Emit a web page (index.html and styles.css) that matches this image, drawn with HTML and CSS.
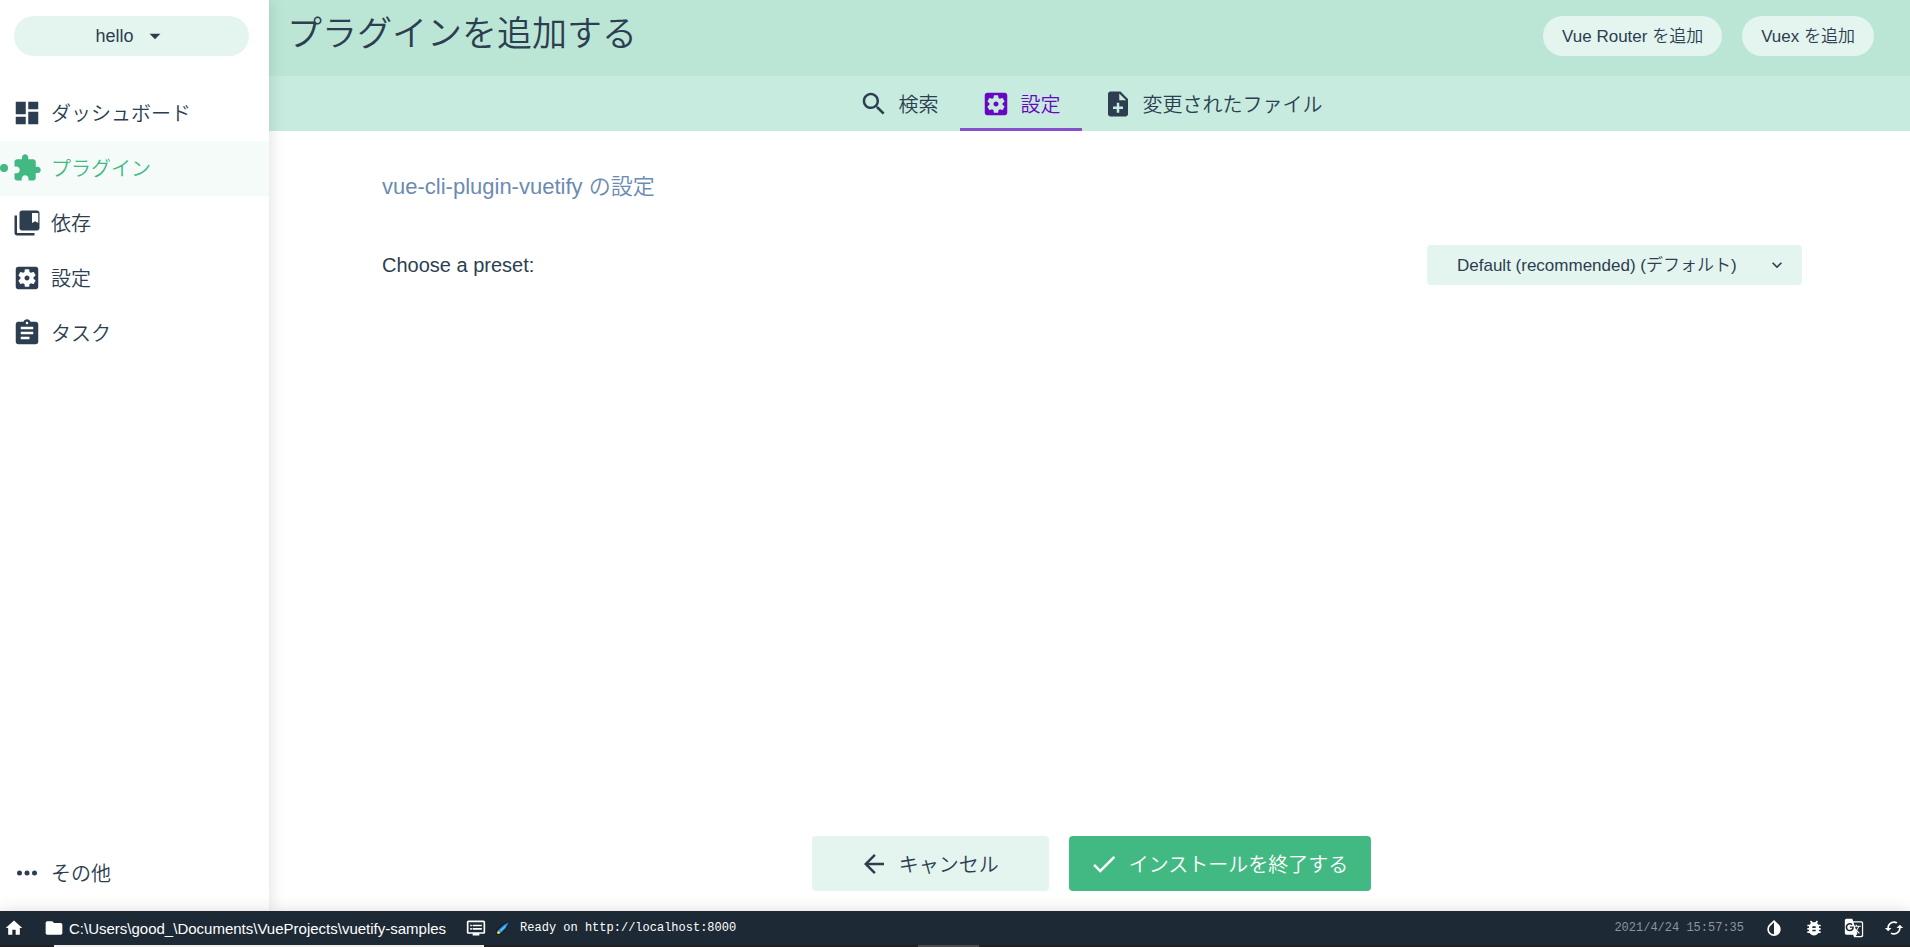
FILE: index.html
```html
<!DOCTYPE html>
<html lang="ja">
  <head>
    <meta charset="UTF-8" />
    <meta name="viewport" content="width=device-width, initial-scale=1.0" />
    <title>プラグインを追加する</title>
    <link rel="stylesheet" href="styles.css">
  </head>
  <body>
    <div class="app">
      <!-- サイドバー -->
      <aside class="sidebar">
        <button class="project-button">
          hello
          <svg class="arrow-down" viewBox="0 0 24 24"><path d="M7 10l5 5 5-5z" /></svg>
        </button>
        <nav class="nav">
          <a href="#" class="nav-item">
            <svg class="icon" viewBox="0 0 24 24"><path d="M3 13h8V3H3v10zm0 8h8v-6H3v6zm10 0h8V11h-8v10zm0-18v6h8V3h-8z" /></svg>
            ダッシュボード
          </a>
          <a href="#" class="nav-item active">
            <svg class="icon" viewBox="0 0 24 24"><path d="M20.5 11H19V7c0-1.1-.9-2-2-2h-4V3.5C13 2.12 11.88 1 10.5 1S8 2.12 8 3.5V5H4c-1.1 0-1.99.9-1.99 2v3.8H3.5c1.49 0 2.7 1.21 2.7 2.7s-1.21 2.7-2.7 2.7H2V20c0 1.1.9 2 2 2h3.8v-1.5c0-1.49 1.21-2.7 2.7-2.7 1.49 0 2.7 1.21 2.7 2.7V22H17c1.1 0 2-.9 2-2v-4h1.5c1.38 0 2.5-1.12 2.5-2.5S21.88 11 20.5 11z" /></svg>
            プラグイン
          </a>
          <a href="#" class="nav-item">
            <svg class="icon" viewBox="0 0 24 24"><path d="M4 6H2v14c0 1.1.9 2 2 2h14v-2H4V6z" /><path d="M20 2H8c-1.1 0-2 .9-2 2v12c0 1.1.9 2 2 2h12c1.1 0 2-.9 2-2V4c0-1.1-.9-2-2-2zm1 10l-2.5-1.5L16 12V4h5v8z" /></svg>
            依存
          </a>
          <a href="#" class="nav-item">
            <svg class="icon" viewBox="0 0 24 24"><path id="settings-path" d="M12 10c-1.1 0-2 .9-2 2s.9 2 2 2 2-.9 2-2-.9-2-2-2zm7-7H5c-1.11 0-2 .9-2 2v14c0 1.1.89 2 2 2h14c1.11 0 2-.9 2-2V5c0-1.1-.89-2-2-2zm-1.75 9c0 .23-.02.46-.05.68l1.48 1.16c.13.11.17.3.08.45l-1.4 2.42c-.09.15-.27.21-.43.15l-1.74-.7c-.36.28-.76.51-1.18.69l-.26 1.85c-.03.17-.18.3-.35.3h-2.8c-.17 0-.32-.13-.35-.29l-.26-1.85c-.43-.18-.82-.41-1.18-.69l-1.74.7c-.16.06-.34 0-.43-.15l-1.4-2.42c-.09-.15-.05-.34.08-.45l1.48-1.16c-.03-.23-.05-.46-.05-.69 0-.23.02-.46.05-.68l-1.48-1.16c-.13-.11-.17-.3-.08-.45l1.4-2.42c.09-.15.27-.21.43-.15l1.74.7c.36-.28.76-.51 1.18-.69l.26-1.85c.03-.17.18-.3.35-.3h2.8c.17 0 .32.13.35.29l.26 1.85c.43.18.82.41 1.18.69l1.74-.7c.16-.06.34 0 .43.15l1.4 2.42c.09.15.05.34-.08.45l-1.48 1.16c.03.23.05.46.05.69z" /></svg>
            設定
          </a>
          <a href="#" class="nav-item">
            <svg class="icon" viewBox="0 0 24 24"><path d="M19 3h-4.18C14.4 1.84 13.3 1 12 1c-1.3 0-2.4.84-2.82 2H5c-1.1 0-2 .9-2 2v14c0 1.1.9 2 2 2h14c1.1 0 2-.9 2-2V5c0-1.1-.9-2-2-2zm-7 0c.55 0 1 .45 1 1s-.45 1-1 1-1-.45-1-1 .45-1 1-1zm2 14H7v-2h7v2zm3-4H7v-2h10v2zm0-4H7V7h10v2z" /></svg>
            タスク
          </a>
        </nav>
        <a href="#" class="nav-item more">
          <svg class="icon" viewBox="0 0 24 24"><circle cx="6" cy="12" r="2" /><circle cx="12" cy="12" r="2" /><circle cx="18" cy="12" r="2" /></svg>
          その他
        </a>
      </aside>

      <!-- メイン -->
      <main class="main">
        <header class="header">
          <h1>プラグインを追加する</h1>
          <button class="round-button">Vue Router を追加</button>
          <button class="round-button">Vuex を追加</button>
        </header>
        <div class="tabs">
          <button class="tab">
            <svg class="icon" viewBox="0 0 24 24"><path d="M15.5 14h-.79l-.28-.27C15.41 12.59 16 11.11 16 9.5 16 5.91 13.09 3 9.5 3S3 5.91 3 9.5 5.91 16 9.5 16c1.61 0 3.09-.59 4.23-1.57l.27.28v.79l5 4.99L20.49 19l-4.99-5zm-6 0C7.01 14 5 11.99 5 9.5S7.01 5 9.5 5 14 7.01 14 9.5 11.99 14 9.5 14z" /></svg>
            検索
          </button>
          <button class="tab active">
            <svg class="icon" viewBox="0 0 24 24"><use href="#settings-path" /></svg>
            設定
          </button>
          <button class="tab">
            <svg class="icon" viewBox="0 0 24 24"><path d="M14 2H6c-1.1 0-1.99.9-1.99 2L4 20c0 1.1.89 2 1.99 2H18c1.1 0 2-.9 2-2V8l-6-6zm2 14h-3v3h-2v-3H8v-2h3v-3h2v3h3v2zm-3-7V3.5L18.5 9H13z" /></svg>
            変更されたファイル
          </button>
        </div>

        <section class="content">
          <h2>vue-cli-plugin-vuetify の設定</h2>
          <div class="prompt">
            <label for="preset">Choose a preset:</label>
            <div class="select-box">
              <select id="preset">
                <option>Default (recommended) (デフォルト)</option>
              </select>
              <svg class="select-arrow" viewBox="0 0 24 24"><path d="M7.41 8.59L12 13.17l4.59-4.58L18 10l-6 6-6-6z" /></svg>
            </div>
          </div>
        </section>

        <div class="actions">
          <button class="big-button cancel">
            <svg class="icon" viewBox="0 0 24 24"><path d="M20 11H7.83l5.59-5.59L12 4l-8 8 8 8 1.41-1.41L7.83 13H20v-2z" /></svg>
            キャンセル
          </button>
          <button class="big-button primary">
            <svg class="icon" viewBox="0 0 24 24"><path d="M9 16.2L4.8 12l-1.4 1.4L9 19 21 7l-1.4-1.4L9 16.2z" /></svg>
            インストールを終了する
          </button>
        </div>
      </main>
    </div>

    <!-- ステータスバー -->
    <footer class="status-bar">
      <a href="#" class="status-item" aria-label="ホーム">
        <svg class="icon-small" viewBox="0 0 24 24"><path d="M10 20v-6h4v6h5v-8h3L12 3 2 12h3v8z" /></svg>
      </a>
      <div class="status-item">
        <svg class="icon-small" viewBox="0 0 24 24"><path d="M10 4H4c-1.1 0-1.99.9-1.99 2L2 18c0 1.1.9 2 2 2h16c1.1 0 2-.9 2-2V8c0-1.1-.9-2-2-2h-8l-2-2z" /></svg>
        C:\Users\good_\Documents\VueProjects\vuetify-samples
      </div>
      <div class="status-item log">
        <svg class="icon-small" viewBox="0 0 24 24"><path d="M21 3H3c-1.1 0-2 .9-2 2v12c0 1.1.9 2 2 2h5v2h8v-2h5c1.1 0 1.99-.9 1.99-2L23 5c0-1.1-.9-2-2-2zm0 14H3V5h18v12zm-2-9H8v2h11V8zm0 4H8v2h11v-2zM7 8H5v2h2V8zm0 4H5v2h2v-2z" /></svg>
        <svg class="comet" viewBox="0 0 14 14">
          <path d="M13.5 0L7 3 .5 9v4.500H5L10.500 8 12 4z" fill="#10151c" />
          <path d="M13 1L7.500 4 1.500 9.500 4.500 12.500 9.500 7.500z" fill="#1c86d8" />
          <path d="M11 3L4 9l1 1.500 4-4z" fill="#6cbcf2" />
          <circle cx="2.500" cy="11.500" r="1.500" fill="#f7dc3b" />
        </svg>
        <span>Ready on http://localhost:8000</span>
      </div>
      <time class="date">2021/4/24 15:57:35</time>
      <button class="status-item" aria-label="テーマ切り替え">
        <svg class="icon-small" viewBox="0 0 24 24"><path d="M17.66 7.93L12 2.27 6.34 7.93c-3.12 3.12-3.12 8.19 0 11.31C7.9 20.8 9.95 21.58 12 21.58c2.05 0 4.1-.78 5.66-2.34 3.12-3.12 3.12-8.19 0-11.31zM12 19.59c-1.6 0-3.11-.62-4.24-1.76C6.62 16.69 6 15.19 6 13.59s.62-3.11 1.76-4.24L12 5.1v14.49z" /></svg>
      </button>
      <button class="status-item" aria-label="バグ報告">
        <svg class="icon-small" viewBox="0 0 24 24"><path d="M20 8h-2.81c-.45-.78-1.07-1.45-1.82-1.96L17 4.41 15.59 3l-2.17 2.17C12.96 5.06 12.49 5 12 5c-.49 0-.96.06-1.41.17L8.41 3 7 4.41l1.62 1.63C7.88 6.55 7.26 7.22 6.81 8H4v2h2.09c-.05.33-.09.66-.09 1v1H4v2h2v1c0 .34.04.67.09 1H4v2h2.81c1.04 1.79 2.97 3 5.19 3s4.15-1.21 5.19-3H20v-2h-2.09c.05-.33.09-.66.09-1v-1h2v-2h-2v-1c0-.34-.04-.67-.09-1H20V8zm-6 8h-4v-2h4v2zm0-4h-4v-2h4v2z" /></svg>
      </button>
      <button class="status-item" aria-label="翻訳">
        <svg class="icon-small" viewBox="0 0 24 24"><path d="M21 4H11l-1-3H3c-1.1 0-2 .9-2 2v15c0 1.1.9 2 2 2h8l1 3h9c1.1 0 2-.9 2-2V6c0-1.1-.9-2-2-2zM7 16c-2.76 0-5-2.24-5-5s2.24-5 5-5c1.35 0 2.48.5 3.35 1.3L9.03 8.57c-.38-.36-1.04-.78-2.03-.78-1.74 0-3.15 1.44-3.15 3.21S5.26 14.21 7 14.21c2.01 0 2.84-1.44 2.92-2.41H7v-1.71h4.68c.07.31.12.61.12 1.02C11.8 13.97 9.89 16 7 16zm6.17-5.42h3.7c-.43 1.25-1.11 2.43-2.05 3.47-.31-.35-.6-.72-.86-1.1l-.79-2.37zm8.33 9.92c0 .55-.45 1-1 1H14l2-2.5-1.04-3.1 3.1 3.1.92-.92-3.3-3.25.02-.02c1.13-1.25 1.93-2.69 2.4-4.22H20v-1.3h-4.53V8h-1.29v1.29h-1.44L11.46 5.5h9.04c.55 0 1 .45 1 1v14z" /></svg>
      </button>
      <button class="status-item" aria-label="更新">
        <svg class="icon-small" viewBox="0 0 24 24"><path d="M19 8l-4 4h3c0 3.31-2.69 6-6 6-1.01 0-1.97-.25-2.8-.7l-1.46 1.46C8.97 19.54 10.43 20 12 20c4.42 0 8-3.58 8-8h3l-4-4zM6 12c0-3.31 2.69-6 6-6 1.01 0 1.97.25 2.8.7l1.46-1.46C15.03 4.46 13.57 4 12 4c-4.42 0-8 3.58-8 8H1l4 4 4-4H6z" /></svg>
      </button>
    </footer>
    <div class="bottom-edge"></div>
  </body>
</html>
```

FILE: styles.css
```css
* {
  box-sizing: border-box;
}

body {
  margin: 0;
  height: 100vh;
  display: flex;
  flex-direction: column;
  font-family: "Liberation Sans", "Noto Sans CJK JP", sans-serif;
  font-size: 20px;
  font-weight: 350;
  color: #2c3e50;
  background-color: white;
}

button,
select {
  border: none;
  font-family: inherit;
  font-weight: inherit;
  color: inherit;
  cursor: pointer;
}

a {
  color: inherit;
  text-decoration: none;
}

.icon {
  width: 30px;
  height: 30px;
  flex-shrink: 0;
  fill: currentColor;
}

.icon-small {
  width: 20px;
  height: 20px;
  flex-shrink: 0;
  fill: currentColor;
}

.app {
  flex: 1;
  display: flex;
  min-height: 0;
}

/* サイドバー */
.sidebar {
  width: 269px;
  display: flex;
  flex-direction: column;
  position: relative;
  z-index: 1;
  background-color: white;
  box-shadow: 0 0 16px rgba(0, 0, 0, 0.14);
}

.project-button {
  height: 40px;
  margin: 16px 20px 30px 14px;
  display: flex;
  align-items: center;
  justify-content: center;
  gap: 8px;
  font-size: 18px;
  border-radius: 20px;
  background-color: #e4f5ef;
}

.arrow-down {
  width: 26px;
  height: 26px;
  fill: currentColor;
}

.nav-item {
  height: 55px;
  padding: 0 0 2px 12px;
  display: flex;
  align-items: center;
  gap: 9px;
}

.nav-item.active {
  position: relative;
  color: #42b983;
  background-color: #f5fbf9;
}

.nav-item.active::before {
  content: "";
  position: absolute;
  left: 0;
  width: 8px;
  height: 8px;
  border-radius: 4px;
  background-color: #42b983;
}

.more {
  margin-top: auto;
  margin-bottom: 10px;
}

/* メイン */
.main {
  flex: 1;
  display: flex;
  flex-direction: column;
}

.header {
  height: 76px;
  padding: 0 36px 4px 18px;
  display: flex;
  align-items: center;
  gap: 20px;
  background-color: #bbe6d6;
}

h1 {
  flex: 1;
  margin: 0;
  padding-bottom: 4px;
  font-size: 35px;
  line-height: 40px;
  font-weight: inherit;
}

.round-button {
  height: 40px;
  padding: 0 19px 4px;
  font-size: 17px;
  border-radius: 20px;
  background-color: #e4f5ef;
}

.tabs {
  height: 55px;
  padding-left: 2px;
  display: flex;
  justify-content: center;
  background-color: #c7ebdf;
}

.tab {
  padding: 0 21px;
  display: flex;
  align-items: center;
  gap: 10px;
  font-size: 20px;
  background: none;
}

.tab.active {
  color: #6806c1;
  box-shadow: inset 0 -3px #8550cb;
}

.content {
  flex: 1;
  padding: 40px 108px 0 113px;
}

h2 {
  margin: 0 0 42px;
  font-size: 22px;
  line-height: 32px;
  font-weight: inherit;
  color: #6b8bb2;
}

.prompt {
  display: flex;
  align-items: center;
  justify-content: space-between;
}

.select-box {
  position: relative;
}

.select-box select {
  width: 375px;
  height: 40px;
  padding: 0 50px 0 30px;
  appearance: none;
  font-size: 17px;
  border-radius: 4px;
  background-color: #e4f5ef;
}

.select-arrow {
  position: absolute;
  right: 15px;
  top: 10px;
  width: 20px;
  height: 20px;
  fill: currentColor;
  pointer-events: none;
}

.actions {
  padding: 0 0 20px 4px;
  display: flex;
  justify-content: center;
  gap: 20px;
}

.big-button {
  height: 55px;
  min-width: 237px;
  padding: 0 23px 0 20px;
  display: flex;
  align-items: center;
  justify-content: center;
  gap: 10px;
  font-size: 20px;
  border-radius: 4px;
}

.cancel {
  background-color: #e4f5ef;
}

.primary {
  color: white;
  background-color: #42b983;
}

/* ステータスバー */
.status-bar {
  height: 34px;
  padding: 0 6px 0 4px;
  display: flex;
  align-items: center;
  gap: 20px;
  position: relative;
  z-index: 2;
  font-size: 15px;
  color: white;
  background-color: #1d2935;
  box-shadow: 0 0 16px rgba(0, 0, 0, 0.14);
}

.status-item {
  padding: 0;
  display: flex;
  align-items: center;
  gap: 5px;
  background: none;
}

.log {
  gap: 10px;
}

.log,
.date {
  font-family: "Liberation Mono", monospace;
  font-size: 12px;
}

.comet {
  width: 14px;
  height: 14px;
}

.date {
  margin-left: auto;
  color: #8e949a;
}

.bottom-edge {
  height: 2px;
  position: relative;
  z-index: 3;
  background: linear-gradient(to right, #202024 54px, #f0f0f0 54px 484px, #202024 484px 918px, #4c4c50 918px 979px, #202024 979px);
}
```
